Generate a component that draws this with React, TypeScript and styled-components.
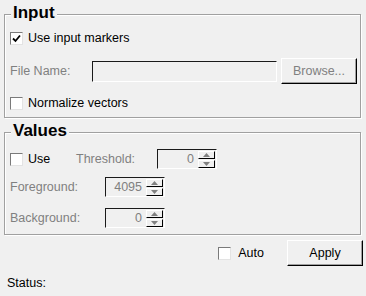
import React from "react";
import styled, {createGlobalStyle} from "styled-components";

const GlobalStyle = createGlobalStyle`
  body {
    margin: 0;
    background: #f0f0f0;
    font-family: "Liberation Sans", Arial, sans-serif;
    font-size: 12.5px;
    color: #000;
  }
`

const Page = styled.div`
  display: flex;
  flex-direction: column;
  width: 366px;
  height: 296px;
  box-sizing: border-box;
  padding: 14px 3px 0 4px;
  background: #f0f0f0;
`

const Group = styled.div<{ $pb: number; $mt?: number }>`
  display: flex;
  flex-direction: column;
  margin: ${p => p.$mt || 0}px 2px 0 0;
  padding: 0 3px ${p => p.$pb}px 5px;
  border: 1px solid #a0a0a0;
  box-shadow: 1px 1px 0 #fff, inset 1px 1px 0 #fff;
`

const Title = styled.div`
  align-self: flex-start;
  margin: -11px 0 0 1px;
  padding: 0 2px;
  height: 18px;
  line-height: 18px;
  font-size: 17px;
  font-weight: bold;
  background: #f0f0f0;
`

const Row = styled.div<{ $h: number; $mt: number; $end?: boolean }>`
  display: flex;
  align-items: center;
  justify-content: ${p => p.$end ? "flex-end" : "flex-start"};
  height: ${p => p.$h}px;
  margin-top: ${p => p.$mt}px;
`

const Label = styled.span<{ $w?: number; $disabled?: boolean }>`
  width: ${p => p.$w ? `${p.$w}px` : "auto"};
  flex-shrink: 0;
  color: ${p => p.$disabled ? "#808080" : "#000"};
  white-space: nowrap;
`

const CheckWrap = styled.label<{ $w?: number; $gap?: number; $mr?: number }>`
  display: flex;
  align-items: center;
  gap: ${p => p.$gap || 5}px;
  width: ${p => p.$w ? `${p.$w}px` : "auto"};
  margin-right: ${p => p.$mr || 0}px;
  flex-shrink: 0;
`

const Box = styled.span`
  display: flex;
  align-items: center;
  justify-content: center;
  width: 13px;
  height: 13px;
  box-sizing: border-box;
  background: #fff;
  border: 1px solid;
  border-color: #7a7a7a #e3e3e3 #e3e3e3 #7a7a7a;
`

const LineEdit = styled.div`
  width: 185px;
  height: 21px;
  box-sizing: border-box;
  border: 1px solid;
  border-color: #1a1a1a #fff #fff #1a1a1a;
  background: #f0f0f0;
  margin-right: 4px;
`

const Button = styled.button<{ $disabled?: boolean }>`
  width: 76px;
  height: 26px;
  padding: 0;
  box-sizing: border-box;
  font: inherit;
  background: #f0f0f0;
  color: ${p => p.$disabled ? "#808080" : "#000"};
  border: 1px solid;
  border-color: #fff #000 #000 #fff;
  box-shadow: inset -1px -1px 0 #a0a0a0;
`

const Spin = styled.div`
  display: flex;
  align-items: center;
  width: 60px;
  height: 20px;
  box-sizing: border-box;
  border: 1px solid;
  border-color: #1a1a1a #fff #fff #1a1a1a;
  padding-right: 1px;
`

const SpinValue = styled.span`
  flex: 1;
  text-align: right;
  padding-right: 4px;
  color: #808080;
`

const SpinButtons = styled.div`
  display: flex;
  flex-direction: column;
  gap: 1px;
`

const SpinButton = styled.span`
  display: flex;
  align-items: center;
  justify-content: center;
  width: 17px;
  height: 8px;
  box-sizing: border-box;
  border: 1px solid;
  border-color: #fff #000 #000 #fff;
  background: #f0f0f0;
`

const Status = styled.div`
  margin: 9px 0 0 3px;
  line-height: 16px;
`

const Check = ({checked}: { checked?: boolean }) => <Box>
    {checked && <svg width="9" height="9" viewBox="0 0 9 9">
        <path d="M1 4.5 L3.5 7 L8 1.5" stroke="#000" strokeWidth="1.8" fill="none"/>
    </svg>}
</Box>

const SpinBox = ({value}: { value: string }) => <Spin>
    <SpinValue>{value}</SpinValue>
    <SpinButtons>
        <SpinButton>
            <svg width="7" height="4" viewBox="0 0 7 4"><path d="M0 4 L3.5 0 L7 4 Z" fill="#808080"/></svg>
        </SpinButton>
        <SpinButton>
            <svg width="7" height="4" viewBox="0 0 7 4"><path d="M0 0 L3.5 4 L7 0 Z" fill="#808080"/></svg>
        </SpinButton>
    </SpinButtons>
</Spin>

const App: React.FC = () => {
    return <>
        <GlobalStyle/>
        <Page>
            <Group $pb={4}>
                <Title>Input</Title>
                <Row $h={20} $mt={6}>
                    <CheckWrap><Check checked/>Use input markers</CheckWrap>
                </Row>
                <Row $h={26} $mt={10}>
                    <Label $w={82} $disabled>File Name:</Label>
                    <LineEdit/>
                    <Button $disabled>Browse...</Button>
                </Row>
                <Row $h={20} $mt={9}>
                    <CheckWrap><Check/>Normalize vectors</CheckWrap>
                </Row>
            </Group>

            <Group $pb={6} $mt={14}>
                <Title>Values</Title>
                <Row $h={20} $mt={9}>
                    <CheckWrap $w={66}><Check/>Use</CheckWrap>
                    <Label $w={81} $disabled>Threshold:</Label>
                    <SpinBox value="0"/>
                </Row>
                <Row $h={20} $mt={8}>
                    <Label $w={95} $disabled>Foreground:</Label>
                    <SpinBox value="4095"/>
                </Row>
                <Row $h={20} $mt={11}>
                    <Label $w={95} $disabled>Background:</Label>
                    <SpinBox value="0"/>
                </Row>
            </Group>

            <Row $h={26} $mt={5} $end>
                <CheckWrap $gap={7} $mr={23}><Check/>Auto</CheckWrap>
                <Button>Apply</Button>
            </Row>

            <Status>Status:</Status>
        </Page>
    </>
}

export default App;
